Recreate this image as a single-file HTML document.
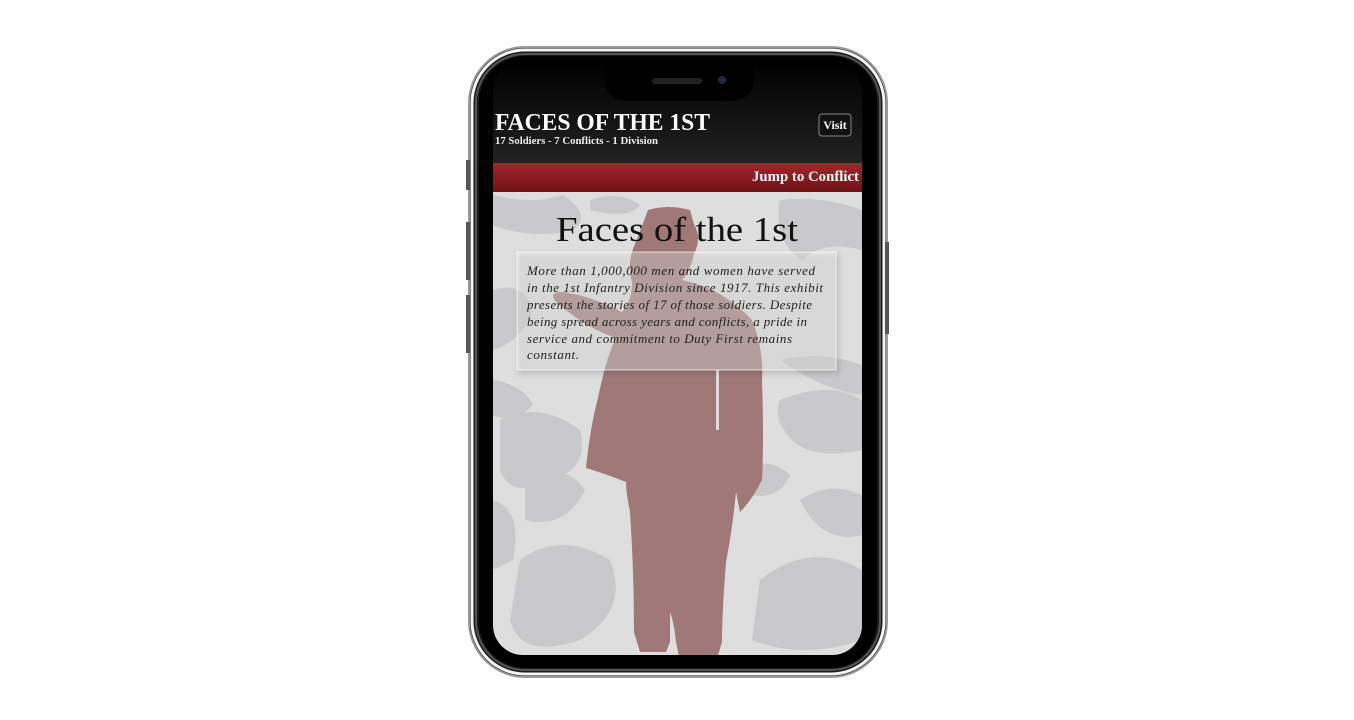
<!DOCTYPE html>
<html><head><meta charset="utf-8"><style>
body{margin:0;width:1354px;height:720px;background:#fff;position:relative;overflow:hidden;font-family:"Liberation Serif",serif}
.abs{position:absolute}
</style></head><body>
<svg class="abs" style="left:0;top:0" width="1354" height="720">
<defs><clipPath id="scr"><rect x="493" y="62" width="369" height="593" rx="30"/></clipPath>
<linearGradient id="hd" x1="0" y1="0" x2="0" y2="1"><stop offset="0" stop-color="#000"/><stop offset="1" stop-color="#222"/></linearGradient>
<linearGradient id="rd" x1="0" y1="0" x2="0" y2="1"><stop offset="0" stop-color="#a3262c"/><stop offset="1" stop-color="#6e1216"/></linearGradient></defs>
<rect x="469" y="47" width="418" height="630" rx="56" fill="#1a1a1a" stroke="#999" stroke-width="2"/>
<rect x="472" y="50" width="412" height="624" rx="53" fill="none" stroke="#f4f4f4" stroke-width="3"/>
<rect x="476" y="54" width="404" height="616" rx="49" fill="none" stroke="#555" stroke-width="2"/>
<rect x="479" y="56" width="398" height="612" rx="46" fill="#000"/>
<rect x="466" y="160" width="4" height="30" fill="#555"/><rect x="466" y="222" width="4" height="58" fill="#555"/><rect x="466" y="295" width="4" height="58" fill="#555"/><rect x="885" y="242" width="4" height="92" fill="#555"/>
<g clip-path="url(#scr)">
<rect x="493" y="62" width="369" height="102" fill="url(#hd)"/>
<rect x="493" y="163" width="369" height="29" fill="url(#rd)"/>
<rect x="493" y="192" width="369" height="470" fill="#dedede"/>
<g fill="#c9c9cb">
<path d="M493 195 q40 10 70 0 q30 20 10 35 q-40 10 -80 -5z"/>
<path d="M590 200 q30 -10 50 5 q-10 15 -50 5z"/>
<path d="M780 200 q40 -5 82 10 v40 q-40 -10 -60 10 q-30 -20 -22 -60z"/>
<path d="M493 290 q30 -10 40 20 q-10 30 -40 40z"/>
<path d="M780 360 q40 -10 82 5 v30 q-40 -5 -82 -35z"/>
<path d="M493 380 q30 5 40 25 q-20 20 -40 10z"/>
<path d="M780 400 q50 -20 82 0 v50 q-50 10 -70 -10 q-20 -20 -12 -40z"/>
<path d="M500 420 q40 -20 80 10 q10 40 -30 50 q-40 20 -50 -10z"/>
<path d="M525 480 q40 -20 60 10 q-20 40 -60 30z"/>
<path d="M520 560 q40 -30 90 0 q20 50 -30 80 q-60 20 -70 -20z"/>
<path d="M760 580 q50 -40 102 -10 v70 q-60 20 -110 0z"/>
<path d="M800 500 q30 -20 62 -5 v40 q-40 10 -62 -35z"/>
<path d="M493 500 q30 10 20 60 l-20 10z"/>
<path d="M740 470 q30 -15 50 5 q-10 25 -40 20z"/>
<path d="M640 520 q40 -20 70 10 l-10 20 q-40 10 -60 -30z"/>
</g>
<path fill="#a07877" d="M648 210 q20 -6 42 0 l4 14 q8 14 0 30 q-4 18 -12 26 q40 8 70 40 q12 30 10 60 q2 60 0 100 q-10 20 -22 32 l-4 -20 q-4 40 -10 70 q-4 50 -4 80 l-6 20 h-36 l-4 -20 q-2 -20 -6 -30 v30 l-4 10 h-26 l-6 -20 q0 -60 -4 -120 q-4 -20 -4 -30 q-20 -8 -40 -14 q4 -40 12 -70 q8 -40 18 -60 q-30 -10 -60 -36 q-8 -10 6 -10 q30 4 60 20 q10 -10 10 -30 q-6 -20 4 -40z"/>
<rect x="716" y="370" width="3" height="60" fill="#dedede"/>
<text x="677" y="241" text-anchor="middle" font-size="35" fill="#111" textLength="242" lengthAdjust="spacingAndGlyphs">Faces of the 1st</text>
<rect x="517" y="252" width="319" height="118" fill="rgba(255,255,255,0.35)" stroke="rgba(255,255,255,0.7)" style="filter:drop-shadow(2px 3px 3px rgba(0,0,0,.35))"/>
<g font-size="13" font-style="italic" fill="#222" lengthAdjust="spacingAndGlyphs">
<text x="527" y="275" textLength="288">More than 1,000,000 men and women have served</text>
<text x="527" y="292" textLength="296">in the 1st Infantry Division since 1917. This exhibit</text>
<text x="527" y="309" textLength="285">presents the stories of 17 of those soldiers. Despite</text>
<text x="527" y="326" textLength="280">being spread across years and conflicts, a pride in</text>
<text x="527" y="343" textLength="265">service and commitment to Duty First remains</text>
<text x="527" y="359" textLength="52">constant.</text>
</g>
<text x="495" y="130" font-size="24" font-weight="bold" fill="#fff" textLength="215" lengthAdjust="spacingAndGlyphs">FACES OF THE 1ST</text>
<text x="495" y="144" font-size="10" font-weight="bold" fill="#eee" textLength="163" lengthAdjust="spacingAndGlyphs">17 Soldiers - 7 Conflicts - 1 Division</text>
<rect x="819" y="114" width="32" height="22" rx="3" fill="#111" stroke="#888"/>
<text x="835" y="129" text-anchor="middle" font-size="12" font-weight="bold" fill="#fff">Visit</text>
<text x="859" y="181" text-anchor="end" font-size="15" font-weight="bold" fill="#fff" textLength="107" lengthAdjust="spacingAndGlyphs">Jump to Conflict</text>
</g>
<path d="M604 62 h150 v14 q0 25 -25 25 h-100 q-25 0 -25 -25z" fill="#000"/>
<rect x="652" y="78" width="50" height="6" rx="3" fill="#222"/>
<circle cx="722" cy="80" r="4" fill="#1a2a44"/>
</svg>
</body></html>
